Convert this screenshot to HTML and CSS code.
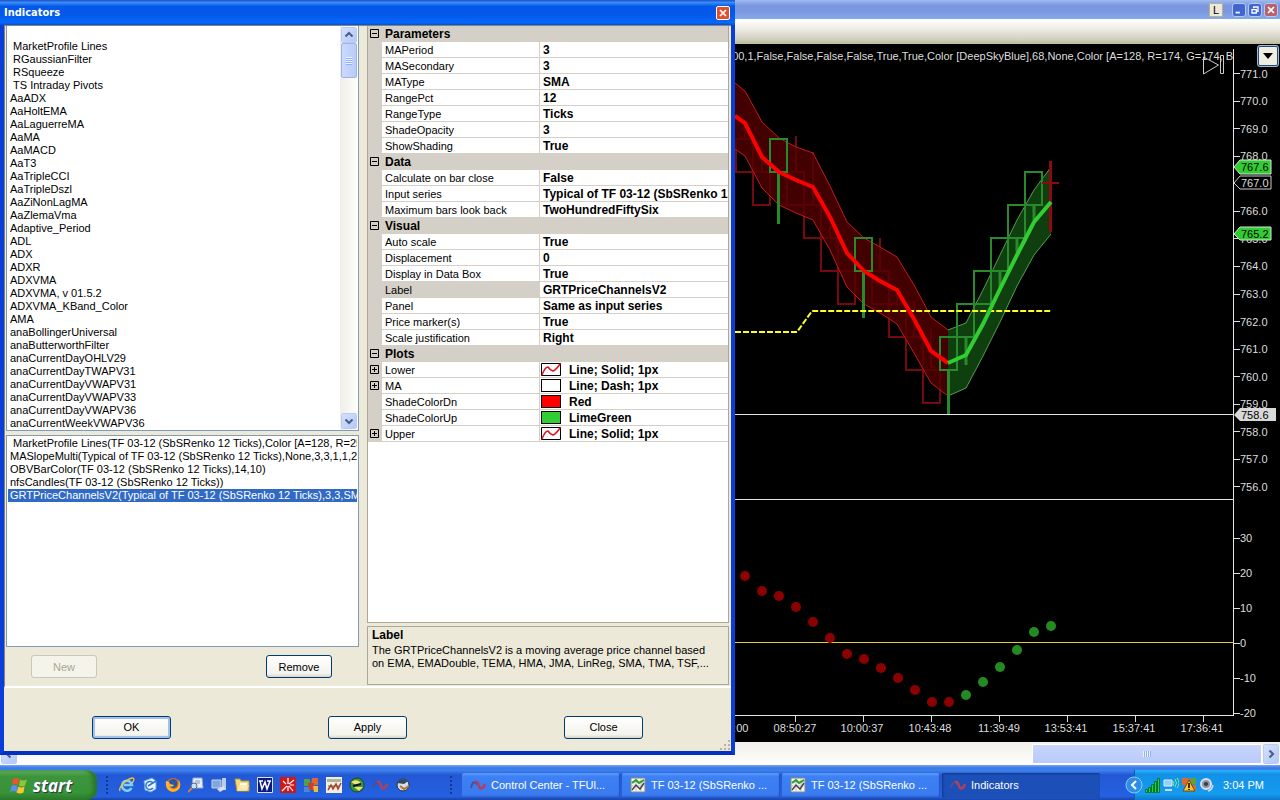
FILE: index.html
```html
<!DOCTYPE html>
<html lang="en">

<head>
  <meta charset="UTF-8">
  <meta name="viewport" content="width=device-width, initial-scale=1.0">
  <title>Indicators</title>
  <link rel="stylesheet" href="styles.css">
</head>
<body>
  <svg class="defs" width="0" height="0">
    <symbol id="minus" viewBox="0 0 9 9"><path d="M.5.5h8v8h-8zM2 4.5h5" fill="none" stroke="#000"/></symbol>
    <symbol id="plus" viewBox="0 0 9 9"><path d="M.5.5h8v8h-8zM2 4.5h5M4.5 2v5" fill="none" stroke="#000"/></symbol>
    <symbol id="up" viewBox="0 0 10 10"><path d="M1.5 6.500l3.500-3.500 3.500 3.500" fill="none" stroke="#4d6185" stroke-width="2.200"/></symbol>
    <symbol id="wave" viewBox="0 0 16 16"><path d="M1 11c1-6 4-8 6-3" fill="none" stroke="#4a4f9c" stroke-width="2"/><path d="M5 5c2-1 3 1 4 4s4 4 6-2" fill="none" stroke="#b0405c" stroke-width="2.500"/></symbol>
    <symbol id="chart" viewBox="0 0 16 16"><path d="M1 1h14v14H1z" fill="#f4f4ea" stroke="#888"/><path d="M2 5h12M2 9h12M6 2v12M11 2v12" stroke="#c8c8c0"/><path d="M2 6l4-3 3 3 5-3" fill="none" stroke="#299a30" stroke-width="2"/><path d="M2 13l4-5 4 4 4-6" fill="none" stroke="#445" stroke-width="1.500"/></symbol>
    <symbol id="line" viewBox="0 0 20 13"><path d="M.5.5h19v12H.5z" fill="#fff" stroke="#000"/><path d="M1 12q3-8 6-8 2 3 5 4 3-1 7-7" fill="none" stroke="#e01020" stroke-width="1.500"/></symbol>
  </svg>

  <main class="desktop">
    <section class="chart-window">
      <header class="chart-title">
        <button class="link-btn">L</button>
        <button class="win-btn" aria-label="Minimize"><svg viewBox="0 0 14 14"><path d="M3 10h5" stroke="#fff" stroke-width="2"/></svg></button>
        <button class="win-btn" aria-label="Restore"><svg viewBox="0 0 14 14"><path d="M5.500 5V3.500h5v5H9M3.500 6.500h5v4h-5z" fill="none" stroke="#fff" stroke-width="1.500"/></svg></button>
        <button class="win-btn win-close" aria-label="Close chart"><svg viewBox="0 0 14 14"><path d="M3.500 3.500l7 7M10.500 3.500l-7 7" stroke="#fff" stroke-width="2"/></svg></button>
      </header>
      <div class="chart-toolbar"></div>
      <div class="chart-area">
        <svg class="chart" viewBox="0 44 1280 698" preserveAspectRatio="xMaxYMin meet">
          <!-- price panel -->
          <g fill="none" stroke="#760810" stroke-width="2">
            <path d="M736 139h17v33h-17zM753 172h17v33h-17zM787 172h17v33h-17zM804 205h17v33h-17zM821 238h17v33h-17zM838 271h17v33h-17zM872 271h17v33h-17zM889 304h17v33h-17zM906 337h17v33h-17zM923 370h17v33h-17z"/>
            <path d="M753 172h34M745 127v12M762 152v20M796 136v36M813 152v53M830 226v12M880 238v33M897 296v8M914 301v36M931 329v41"/>
          </g>
          <path d="M735 83L745 91L762 122L779 138L796 147L813 153L830 186L847 222L864 238L880 247L897 257L914 285L931 317L948 330V396L931 383L914 353L897 324L880 313L864 304L847 287L830 250L813 220L796 213L779 205L762 188L745 156L735 149z" fill="#520000" fill-opacity=".8"/>
          <path d="M735 83L745 91L762 122L779 138L796 147L813 153L830 186L847 222L864 238L880 247L897 257L914 285L931 317L948 330M735 149L745 156L762 188L779 205L796 213L813 220L830 250L847 287L864 304L880 313L897 324L914 353L931 383L948 396" fill="none" stroke="#c41820"/>
          <path d="M948 330L966 323L983 290L1000 255L1017 220L1034 190L1051 167V234L1034 255L1017 286L1000 322L983 356L966 388L948 396z" fill="#32cd32" fill-opacity=".3"/>
          <path d="M948 330L966 323L983 290L1000 255L1017 220L1034 190L1051 167M948 396L966 388L983 356L1000 322L1017 286L1034 255L1051 234" fill="none" stroke="#4fa14f"/>
          <g fill="none" stroke="#278a2b" stroke-width="2">
            <path d="M770 139h17v33h-17zM855 238h17v33h-17zM940 337h17v33h-17zM957 304h17v33h-17zM974 271h17v33h-17zM991 238h17v33h-17zM1008 205h17v33h-17zM1025 172h17v33h-17z"/>
            <path d="M778.500 172v52M863.500 271v47M948.500 370v44M966 337v28M1000 271v20M1017 238v14M1034 205v15" stroke-width="3"/>
          </g>
          <path d="M1050.500 161v71" stroke="#8b0a12" stroke-width="3"/>
          <path d="M1042 183h17" stroke="#8b0a12" stroke-width="2"/>
          <path d="M735 332h62l15-21h239" fill="none" stroke="#ff2" stroke-width="2" stroke-dasharray="6 2"/>
          <path d="M735 116L745 123L762 157L779 172L796 180L813 187L830 217L847 253L864 271L880 281L897 290L914 319L931 351L948 363" fill="none" stroke="#f00" stroke-width="4"/>
          <path d="M948 363L966 355L983 324L1000 289L1017 255L1034 222L1051 202" fill="none" stroke="#32cd32" stroke-width="4"/>
          <path d="M0 414.500h1234M0 499.500h1234M1233.500 49v667M0 715.500h1234" stroke="#e4e4e4" fill="none"/>
          <path d="M0 642.500h1234" stroke="#e8c93c"/>
          <path d="M1234 73.500h6M1234 101.500h6M1234 128.500h6M1234 156.500h6M1234 183.500h6M1234 211.500h6M1234 238.500h6M1234 266.500h6M1234 294.500h6M1234 321.500h6M1234 349.500h6M1234 376.500h6M1234 404.500h6M1234 431.500h6M1234 459.500h6M1234 486.500h6M1234 538.500h6M1234 573.500h6M1234 608.500h6M1234 643.500h6M1234 678.500h6M1234 713.500h6" stroke="#ddd"/>
          <path d="M795.500 716v6M863.500 716v6M931.500 716v6M999.500 716v6M1067.500 716v6M1135.500 716v6M1203.500 716v6" stroke="#ddd"/>
          <g class="axis">
            <text x="1240" y="78">771.0</text><text x="1240" y="105">770.0</text><text x="1240" y="133">769.0</text><text x="1240" y="160">768.0</text>
            <text x="1240" y="215">766.0</text><text x="1240" y="243">765.0</text><text x="1240" y="270">764.0</text><text x="1240" y="298">763.0</text>
            <text x="1240" y="326">762.0</text><text x="1240" y="353">761.0</text><text x="1240" y="381">760.0</text><text x="1240" y="408">759.0</text>
            <text x="1240" y="436">758.0</text><text x="1240" y="463">757.0</text><text x="1240" y="491">756.0</text>
            <text x="1240" y="542">30</text><text x="1240" y="577">20</text><text x="1240" y="612">10</text><text x="1240" y="647">0</text><text x="1240" y="682">-10</text><text x="1240" y="717">-20</text>
          </g>
          <g class="axis" text-anchor="middle">
            <text x="727" y="732">08:14:00</text><text x="795" y="732">08:50:27</text><text x="862" y="732">10:00:37</text><text x="930" y="732">10:43:48</text>
            <text x="999" y="732">11:39:49</text><text x="1066" y="732">13:53:41</text><text x="1134" y="732">15:37:41</text><text x="1202" y="732">17:36:41</text>
          </g>
          <!-- price markers -->
          <path d="M1234 167l6-7h31v14h-31zM1234 234l6-7h31v13h-31z" fill="#32cd32" stroke="#cfe8cf"/>
          <path d="M1234 183l6-7h31v13h-31z" fill="#000" stroke="#ccc"/>
          <path d="M1234 415l6-7h36v13h-36z" fill="#d8d8d8"/>
          <g class="mark"><text x="1241" y="171">767.6</text><text x="1241" y="187" fill="#ddd">767.0</text><text x="1241" y="238">765.2</text><text x="1241" y="419">758.6</text></g>
          <!-- oscillator dots -->
          <g fill="#8b0000">
            <circle cx="745" cy="576" r="5"/><circle cx="762" cy="591" r="5"/><circle cx="779" cy="596" r="5"/><circle cx="796" cy="607" r="5"/><circle cx="813" cy="622" r="5"/>
            <circle cx="830" cy="638" r="5"/><circle cx="847" cy="654" r="5"/><circle cx="864" cy="659" r="5"/><circle cx="881" cy="668" r="5"/><circle cx="898" cy="678" r="5"/>
            <circle cx="915" cy="690" r="5"/><circle cx="932" cy="702" r="5"/><circle cx="949" cy="702" r="5"/>
          </g>
          <g fill="#228b22">
            <circle cx="966" cy="695" r="5"/><circle cx="983" cy="682" r="5"/><circle cx="1000" cy="667" r="5"/><circle cx="1017" cy="650" r="5"/><circle cx="1034" cy="632" r="5"/><circle cx="1051" cy="626" r="5"/>
          </g>
          <text class="axis" x="1233" y="60" text-anchor="end">00,1,False,False,False,False,True,True,Color [DeepSkyBlue],68,None,Color [A=128, R=174, G=174, B</text>
          <path d="M1203.500 57v17l15-9zM1220.500 55.500h3v18h-3z" fill="none" stroke="#ccc"/>
        </svg>
        <button class="panel-menu" aria-label="Chart menu"><svg viewBox="0 0 10 6"><path d="M0 0h10L5 6z"/></svg></button>
      </div>
      <div class="hscroll">
        <button class="sb-btn left" aria-label="Scroll left"><svg><use href="#up"/></svg></button>
        <span class="hthumb"></span>
        <button class="sb-btn right" aria-label="Scroll right"><svg><use href="#up"/></svg></button>
      </div>
    </section>

    <section class="dialog">
      <header class="dialog-title">
        <h1>Indicators</h1>
        <button class="close-btn" aria-label="Close dialog"><svg viewBox="0 0 14 14"><path d="M3.500 3.500l7 7M10.500 3.500l-7 7" stroke="#fff" stroke-width="2"/></svg></button>
      </header>
      <div class="dialog-body">
        <div class="left-col">
          <div class="list-wrap">
            <select class="list available" size="31" aria-label="Available indicators">
              <option>&nbsp;</option>
              <option>&nbsp;MarketProfile Lines</option>
              <option>&nbsp;RGaussianFilter</option>
              <option>&nbsp;RSqueeze</option>
              <option>&nbsp;TS Intraday Pivots</option>
              <option>AaADX</option>
              <option>AaHoltEMA</option>
              <option>AaLaguerreMA</option>
              <option>AaMA</option>
              <option>AaMACD</option>
              <option>AaT3</option>
              <option>AaTripleCCI</option>
              <option>AaTripleDszl</option>
              <option>AaZiNonLagMA</option>
              <option>AaZlemaVma</option>
              <option>Adaptive_Period</option>
              <option>ADL</option>
              <option>ADX</option>
              <option>ADXR</option>
              <option>ADXVMA</option>
              <option>ADXVMA, v 01.5.2</option>
              <option>ADXVMA_KBand_Color</option>
              <option>AMA</option>
              <option>anaBollingerUniversal</option>
              <option>anaButterworthFilter</option>
              <option>anaCurrentDayOHLV29</option>
              <option>anaCurrentDayTWAPV31</option>
              <option>anaCurrentDayVWAPV31</option>
              <option>anaCurrentDayVWAPV33</option>
              <option>anaCurrentDayVWAPV36</option>
              <option>anaCurrentWeekVWAPV36</option>
            </select>
            <div class="vscroll">
              <button class="sb-btn" aria-label="Scroll up"><svg><use href="#up"/></svg></button>
              <span class="vthumb"></span>
              <button class="sb-btn down" aria-label="Scroll down"><svg><use href="#up"/></svg></button>
            </div>
          </div>
          <select class="list active" size="16" aria-label="Active indicators">
            <option>&nbsp;MarketProfile Lines(TF 03-12 (SbSRenko 12 Ticks),Color [A=128, R=255</option>
            <option>MASlopeMulti(Typical of TF 03-12 (SbSRenko 12 Ticks),None,3,3,1,1,255</option>
            <option>OBVBarColor(TF 03-12 (SbSRenko 12 Ticks),14,10)</option>
            <option>nfsCandles(TF 03-12 (SbSRenko 12 Ticks))</option>
            <option selected>GRTPriceChannelsV2(Typical of TF 03-12 (SbSRenko 12 Ticks),3,3,SMA</option>
          </select>
          <div class="list-btns">
            <button class="btn small" disabled>New</button>
            <button class="btn small">Remove</button>
          </div>
        </div>
        <div class="right-col">
          <div class="grid-box">
            <table class="props">
              <colgroup><col class="c-gutter"><col class="c-name"><col></colgroup>
              <tr class="cat"><td><button class="exp" aria-label="Collapse"><svg><use href="#minus"/></svg></button></td><th colspan="2">Parameters</th></tr>
              <tr><td></td><td>MAPeriod</td><td>3</td></tr>
              <tr><td></td><td>MASecondary</td><td>3</td></tr>
              <tr><td></td><td>MAType</td><td>SMA</td></tr>
              <tr><td></td><td>RangePct</td><td>12</td></tr>
              <tr><td></td><td>RangeType</td><td>Ticks</td></tr>
              <tr><td></td><td>ShadeOpacity</td><td>3</td></tr>
              <tr><td></td><td>ShowShading</td><td>True</td></tr>
              <tr class="cat"><td><button class="exp" aria-label="Collapse"><svg><use href="#minus"/></svg></button></td><th colspan="2">Data</th></tr>
              <tr><td></td><td>Calculate on bar close</td><td>False</td></tr>
              <tr><td></td><td>Input series</td><td>Typical of TF 03-12 (SbSRenko 12 Ticks)</td></tr>
              <tr><td></td><td>Maximum bars look back</td><td>TwoHundredFiftySix</td></tr>
              <tr class="cat"><td><button class="exp" aria-label="Collapse"><svg><use href="#minus"/></svg></button></td><th colspan="2">Visual</th></tr>
              <tr><td></td><td>Auto scale</td><td>True</td></tr>
              <tr><td></td><td>Displacement</td><td>0</td></tr>
              <tr><td></td><td>Display in Data Box</td><td>True</td></tr>
              <tr class="current"><td></td><td>Label</td><td>GRTPriceChannelsV2</td></tr>
              <tr><td></td><td>Panel</td><td>Same as input series</td></tr>
              <tr><td></td><td>Price marker(s)</td><td>True</td></tr>
              <tr><td></td><td>Scale justification</td><td>Right</td></tr>
              <tr class="cat"><td><button class="exp" aria-label="Collapse"><svg><use href="#minus"/></svg></button></td><th colspan="2">Plots</th></tr>
              <tr class="plot"><td><button class="exp" aria-label="Expand"><svg><use href="#plus"/></svg></button></td><td>Lower</td><td><svg class="swatch"><use href="#line"/></svg>Line; Solid; 1px</td></tr>
              <tr class="plot"><td><button class="exp" aria-label="Expand"><svg><use href="#plus"/></svg></button></td><td>MA</td><td><span class="swatch"></span>Line; Dash; 1px</td></tr>
              <tr class="plot"><td></td><td>ShadeColorDn</td><td><span class="swatch red"></span>Red</td></tr>
              <tr class="plot"><td></td><td>ShadeColorUp</td><td><span class="swatch green"></span>LimeGreen</td></tr>
              <tr class="plot"><td><button class="exp" aria-label="Expand"><svg><use href="#plus"/></svg></button></td><td>Upper</td><td><svg class="swatch"><use href="#line"/></svg>Line; Solid; 1px</td></tr>
            </table>
          </div>
          <div class="desc">
            <h2>Label</h2>
            <p>The GRTPriceChannelsV2 is a moving average price channel based<br>on EMA, EMADouble, TEMA, HMA, JMA, LinReg, SMA, TMA, TSF,...</p>
          </div>
        </div>
      </div>
      <footer class="dialog-footer">
        <button class="btn default">OK</button>
        <button class="btn">Apply</button>
        <button class="btn">Close</button>
        <svg class="grip" viewBox="0 0 12 12"><path d="M9 1h2v2H9zM5 5h2v2H5zM9 5h2v2H9zM1 9h2v2H1zM5 9h2v2H5zM9 9h2v2H9z" fill="#b8b4a0"/></svg>
      </footer>
    </section>
  </main>

  <nav class="taskbar">
    <button class="start">
      <svg viewBox="0 0 18 18"><path d="M3 3q3-2 6 0L8 9Q5 7 2 9z" fill="#e8562c"/><path d="M10 3.500q3 2 7 0l-2 6q-3 2-6 0z" fill="#8cc63c"/><path d="M1.500 10q3-2 6 0l-1 6Q4 14 0 16z" fill="#5a8ef0"/><path d="M8.500 10.500q3 2 6 0l-1 6q-4 2-7 0z" fill="#fbc52d"/></svg>
      start
    </button>
    <span class="dots"></span>
    <div class="quick">
      <button aria-label="Internet Explorer"><svg viewBox="0 0 16 16"><path d="M12.500 11A5 5 0 1 1 13 8H5" fill="none" stroke="#7fd0ff" stroke-width="2.500"/><path d="M1 14C-1 10 9 1 14 1c2 1 0 4-1 5" fill="none" stroke="#f4c430" stroke-width="1.300"/></svg></button>
      <button aria-label="Outlook Express"><svg viewBox="0 0 16 16"><path d="M2 4l8-3 4 3v8l-5 3-6-2z" fill="#e8f4ff" stroke="#5ba4e0"/><path d="M11 6a4 4 0 1 0 0 5M6 9l8-5" fill="none" stroke="#2d77c8" stroke-width="1.500"/></svg></button>
      <button aria-label="Firefox"><svg viewBox="0 0 16 16"><circle cx="8" cy="8" r="7" fill="#e66a10"/><circle cx="8" cy="6.500" r="4.500" fill="#2a55a8"/><path d="M1 4q3 0 4 3l4 1q-1 3-5 1 3 5 8 2 3-3 1-9 4 5 1 10-4 4-9 2Q0 11 1 4z" fill="#ffb62e"/></svg></button>
      <button aria-label="Search"><svg viewBox="0 0 16 16"><path d="M5 1h9l1 10H4z" fill="#e9f0ff" stroke="#90a8d8"/><path d="M7 4h5M7 6h5" stroke="#7898d0"/><circle cx="6" cy="9" r="3" fill="#bfe0ff" stroke="#667"/><path d="M4 11l-4 4" stroke="#c88050" stroke-width="2"/></svg></button>
      <button aria-label="Show desktop"><svg viewBox="0 0 16 16"><path d="M1 3h9v8H1z" fill="#7fa8e0" stroke="#ccd"/><path d="M11 1h4v12h-4z" fill="#b8cce8"/><path d="M6 12l7-3 1 3-5 3z" fill="#dde"/></svg></button>
      <button aria-label="Explorer"><svg viewBox="0 0 16 16"><path d="M1 2h5l1 2h8v10H3z" fill="#f3d978" stroke="#b8923c"/><path d="M6 6h7v6H6z" fill="#fff"/><path d="M3 14l2-6h10l-2 6z" fill="#fce89a" opacity=".8"/></svg></button>
      <button aria-label="Word"><svg viewBox="0 0 16 16"><path d="M.5.5h15v15H.5z" fill="#0a1a80" stroke="#dde"/><path d="M3 4l2 8 3-7 2 7 3-8M2 4h4M10 4h4" fill="none" stroke="#fff" stroke-width="1.500"/></svg></button>
      <button aria-label="Trading"><svg viewBox="0 0 16 16"><path d="M0 0h16v16H0z" fill="#d01818"/><path d="M8 7V1M9 7l5-4M9 9l4 5M7 9l-5 5M6 7L3 4M8 9v5M10 8h4" stroke="#fff" stroke-width="1.200"/></svg></button>
      <button aria-label="Office"><svg viewBox="0 0 16 16"><path d="M1 2h6v7H1z" fill="#58a048"/><path d="M9 1h6v7H8z" fill="#e0682c"/><path d="M1 10h5l1 5H1z" fill="#4888d8"/><path d="M5 6h6v7H6z" fill="#c84030"/><path d="M10 9h5v6h-4z" fill="#f0bc38"/></svg></button>
      <button aria-label="Charts"><svg viewBox="0 0 16 16"><path d="M0 0h16v16H0z" fill="#f3efe0"/><path d="M1 2h14v3H1z" fill="#aab4a0"/><path d="M2 13l3-5 2 4 3-5 2 5 3-6" fill="none" stroke="#c03028" stroke-width="1.500"/><path d="M2 9h12" stroke="#40803c"/></svg></button>
      <button aria-label="Globe"><svg viewBox="0 0 16 16"><circle cx="8" cy="8" r="7" fill="#3c9838" stroke="#184820"/><path d="M2 5q6-4 10 1L7 8zM5 10h9l-4 4z" fill="#f6e070"/><path d="M4 9l8-2" stroke="#113" stroke-width="2"/></svg></button>
      <button aria-label="NinjaTrader"><svg><use href="#wave"/></svg></button>
      <button aria-label="Mail"><svg viewBox="0 0 16 16"><circle cx="8" cy="8" r="6" fill="#d8dce8" stroke="#234"/><path d="M2 6q4-6 11-2L9 7z" fill="#334860"/><path d="M5 9l4 3 5-3" fill="none" stroke="#a87838" stroke-width="2"/></svg></button>
    </div>
    <span class="dots"></span>
    <div class="tasks">
      <button class="task"><svg><use href="#wave"/></svg>Control Center - TFUl...</button>
      <button class="task"><svg><use href="#chart"/></svg>TF 03-12 (SbSRenko ...</button>
      <button class="task"><svg><use href="#chart"/></svg>TF 03-12 (SbSRenko ...</button>
      <button class="task pressed"><svg><use href="#wave"/></svg>Indicators</button>
    </div>
    <div class="tray">
      <button class="chevron" aria-label="Show hidden icons"><svg viewBox="0 0 18 18"><circle cx="9" cy="9" r="8" fill="#2d8ee8" stroke="#8cc8ff"/><path d="M11 5L7 9l4 4" fill="none" stroke="#fff" stroke-width="2"/></svg></button>
      <svg viewBox="0 0 16 16"><path d="M.5 12.500h2v3h-2zM3.500 10.500h2v5h-2zM6.500 7.500h2v8h-2zM9.500 4.500h2v11h-2zM12.500 1.500h2v14h-2z" fill="#2fd038" stroke="#073" /></svg>
      <svg viewBox="0 0 16 16"><path d="M1 3h8v6H1z" fill="#8fd0ff" stroke="#def"/><path d="M2 12h7v2H2z" fill="#cde"/><path d="M10 4q2 2 0 5M12 2q3 4 0 8M14 1q4 5 0 10" fill="none" stroke="#7df080"/></svg>
      <svg viewBox="0 0 16 16"><path d="M1 1h7v7H1zM9 8h6v6H9z" fill="#e0682c"/><path d="M9 1h6v6H9z" fill="#6a9c38"/><path d="M8 3l6 11H2z" fill="#ffc425" stroke="#7a4a08"/><path d="M8 6v5M8 12v1" stroke="#000" stroke-width="1.500"/></svg>
      <svg viewBox="0 0 16 16"><circle cx="7" cy="7" r="5" fill="#8c94a0" stroke="#dde" stroke-width="2"/><circle cx="7" cy="7" r="2" fill="#333a48"/><path d="M14 8q-1 5-5 6" fill="none" stroke="#cde" stroke-width="1.500"/></svg>
      <time>3:04 PM</time>
    </div>
  </nav>
</body>

</html>
```

FILE: styles.css
```css
* {
  box-sizing: border-box;
}

body {
  margin: 0;
  height: 100vh;
  display: flex;
  flex-direction: column;
  overflow: hidden;
  font-family: "Liberation Sans", Arial, sans-serif;
  font-size: 11px;
  color: #000;
}

button {
  font: inherit;
  padding: 0;
  border: none;
  background: none;
  color: inherit;
}

svg {
  display: block;
}

.defs {
  position: absolute;
}

.desktop {
  flex: 1;
  min-height: 0;
  display: flex;
  position: relative;
}

/* chart window behind the dialog */
.chart-window {
  flex: 1;
  min-width: 0;
  display: flex;
  flex-direction: column;
  background: #000;
}

.chart-title {
  height: 19px;
  display: flex;
  justify-content: flex-end;
  align-items: center;
  gap: 2px;
  padding-right: 2px;
  background: linear-gradient(#a0bcf0, #7a96df 30%, #7b98e0 60%, #84abeb);
}

.link-btn {
  width: 14px;
  height: 14px;
  margin-right: 7px;
  background: #ece9d8;
  border: 1px solid #b8b090;
  line-height: 12px;
}

.win-btn {
  width: 14px;
  height: 14px;
  border: 1px solid #b4c8f4;
  border-radius: 3px;
  background: #4166d0;
}

.win-close {
  background: #b8606c;
}

.chart-toolbar {
  height: 25px;
  background: linear-gradient(#fff, #eeece4 40%, #d2d0c0 80%, #bdbd9c);
}

.chart-area {
  flex: 1;
  min-height: 0;
  position: relative;
}

.chart {
  width: 100%;
  height: 100%;
}

.axis {
  fill: #ddd;
  font-size: 11px;
}

.mark {
  font-size: 11px;
}

.panel-menu {
  position: absolute;
  top: 1px;
  right: 1px;
  width: 22px;
  height: 22px;
  background: #f0eee2;
  border: 2px solid #1c4a80;
  border-radius: 3px;
  outline: 1px solid #a8b8c8;
  outline-offset: -1px;
}

.panel-menu svg {
  width: 10px;
  height: 6px;
  margin: auto;
}

.hscroll {
  height: 23px;
  display: flex;
  align-items: center;
  padding: 0 1px;
  background: linear-gradient(#f2f0ea, #fefefc);
}

.hthumb {
  width: 18%;
  height: 20px;
  margin: 0 1px 0 auto;
  border: 1px solid #fff;
  border-radius: 2px;
  background:
    repeating-linear-gradient(90deg, #eef4fe 0 1px, #8cb0f8 1px 2px) center / 8px 6px no-repeat,
    linear-gradient(#c8d6fb, #b9cafa);
}

.sb-btn {
  width: 16px;
  height: 16px;
  flex: none;
  display: flex;
  align-items: center;
  justify-content: center;
  border: 1px solid #fff;
  border-radius: 2px;
  background: linear-gradient(135deg, #d4e0fd, #b4c8f8);
  outline: 1px solid #b8cbf4;
  outline-offset: -1px;
}

.sb-btn svg {
  width: 10px;
  height: 10px;
}

.hscroll .sb-btn {
  height: 20px;
}

.sb-btn.down svg {
  transform: rotate(180deg);
}

.sb-btn.right svg {
  transform: rotate(90deg);
}

.sb-btn.left svg {
  transform: rotate(-90deg);
}

/* indicators dialog */
.dialog {
  position: absolute;
  top: 0;
  left: 0;
  width: 735px;
  max-width: 100%;
  height: calc(100% - 10px);
  display: flex;
  flex-direction: column;
  background: #ece9d8;
  border: 4px solid #0a3ed8;
  border-top: none;
  border-bottom-color: #0430c0;
}

.dialog-title {
  height: 25px;
  flex: none;
  margin: 0 -4px;
  padding: 0 5px 0 4px;
  display: flex;
  align-items: center;
  justify-content: space-between;
  background: linear-gradient(#1c50c8, #3a8cf8 10%, #0458e8 25%, #0458ea 60%, #0468fc 90%, #0450d8);
}

.dialog-title h1 {
  margin: 0;
  font: bold 11px "DejaVu Sans Condensed", "DejaVu Sans", sans-serif;
  color: #fff;
}

.close-btn {
  width: 14px;
  height: 14px;
  border: 1px solid #fff;
  border-radius: 2px;
  background: #e0502c;
}

.close-btn svg,
.win-btn svg {
  width: 12px;
  height: 12px;
}

.dialog-body {
  flex: 1;
  min-height: 0;
  display: flex;
  gap: 8px;
  padding: 0 2px 0 1px;
  border-left: 1px solid #888474;
  border-top: 1px solid #888474;
  border-bottom: 2px solid #fff;
}

.left-col {
  flex: 1;
  min-width: 0;
  display: flex;
  flex-direction: column;
}

.list-wrap {
  flex: 1;
  min-height: 0;
  display: flex;
  border: 1px solid #7f9db9;
  border-top: none;
  background: #fff;
}

.list {
  display: block;
  margin: 0;
  padding: 1px 0 0 1px;
  border: none;
  border-radius: 0;
  outline: none;
  overflow: hidden;
  background: #fff;
  color: #000;
  font-family: inherit;
  font-size: 11px;
}

.list option {
  height: 13px;
  min-height: 0;
  padding: 0 2px;
  line-height: 13px;
  overflow: hidden;
}

.available {
  flex: 1;
  min-width: 0;
  height: 100%;
}

.active {
  width: 100%;
  height: 212px;
  margin-top: 4px;
  border: 1px solid #7f9db9;
  padding-right: 1px;
}

.active option:checked {
  background: #316ac5 linear-gradient(#316ac5, #316ac5);
  color: #fff;
}

.vscroll {
  width: 18px;
  padding: 1px;
  display: flex;
  flex-direction: column;
  background: linear-gradient(90deg, #f0eee8, #fefefc);
}

.vthumb {
  height: 35px;
  margin-bottom: auto;
  border: 1px solid #9cb4ec;
  border-radius: 2px;
  background:
    repeating-linear-gradient(#eef4fe 0 1px, #8cb0f8 1px 2px) center / 6px 8px no-repeat,
    linear-gradient(90deg, #cbd9fd, #b9cbf8);
}

.list-btns {
  height: 39px;
  display: flex;
  align-items: center;
  justify-content: space-between;
  padding: 0 27px 0 25px;
}

.btn {
  width: 79px;
  height: 23px;
  border: 1px solid #003c74;
  border-radius: 3px;
  background: linear-gradient(#fff, #f3f2ec 85%, #d8d2c4);
}

.btn.small {
  width: 66px;
}

.btn.default {
  box-shadow: inset 0 0 0 2px #a4c0f0;
}

.btn:disabled {
  border-color: #c9c7ba;
  background: #f5f4ea;
  color: #a8a594;
}

.right-col {
  width: 362px;
  flex: none;
  display: flex;
  flex-direction: column;
  gap: 3px;
}

.grid-box {
  flex: 1;
  min-height: 0;
  border: 1px solid #aca899;
  border-top: none;
  background: #fff;
  overflow: hidden;
}

.props {
  width: 100%;
  table-layout: fixed;
  border-collapse: separate;
  border-spacing: 0;
}

.c-gutter {
  width: 14px;
}

.c-name {
  width: 158px;
}

.props td,
.props th {
  height: 16px;
  padding: 1px 3px 0;
  line-height: 14px;
  border-bottom: 1px solid #d4d0c8;
  white-space: nowrap;
  overflow: hidden;
  text-align: left;
}

.props td:first-child,
.props .cat th,
.props .current td:nth-child(2) {
  background: #d4d0c8;
}

.props td:first-child {
  padding: 0 2px;
}

.props td:nth-child(2) {
  border-right: 1px solid #d4d0c8;
}

.props .cat th,
.props td:nth-child(3) {
  font-size: 12px;
  font-weight: bold;
}

.exp {
  display: block;
  width: 9px;
  height: 9px;
}

.exp svg {
  width: 9px;
  height: 9px;
}

.swatch {
  float: left;
  width: 20px;
  height: 13px;
  margin: 0 8px 0 -2px;
  border: 1px solid #000;
  background: #fff;
}

svg.swatch {
  border: none;
}

.swatch.red {
  background: #f00;
}

.swatch.green {
  background: #32cd32;
}

.desc {
  height: 59px;
  margin-bottom: 1px;
  padding: 2px 4px;
  border: 1px solid #aca899;
  line-height: 13px;
}

.desc h2 {
  margin: 0 0 2px;
  font-size: 12px;
  line-height: 13px;
}

.desc p {
  margin: 0;
  white-space: nowrap;
}

.dialog-footer {
  height: 63px;
  flex: none;
  position: relative;
  display: flex;
  align-items: center;
  justify-content: center;
  gap: 157px;
  padding-top: 15px;
}

.grip {
  position: absolute;
  right: 0;
  bottom: 0;
  width: 12px;
  height: 12px;
}

/* taskbar */
.taskbar {
  height: 35px;
  flex: none;
  display: flex;
  align-items: stretch;
  padding-top: 5px;
  color: #fff;
  background: linear-gradient(#7ba4f0, #3a7ae8 8%, #3c80ee 16%, #2358d4 28%, #245edc 70%, #2460e0 90%, #1a44a8);
}

.start {
  width: 97px;
  display: flex;
  align-items: center;
  gap: 5px;
  padding-left: 10px;
  border-radius: 0 10px 10px 0;
  background: linear-gradient(#6cb868, #3c943c 20%, #389438 75%, #2c7c2c);
  box-shadow: inset -4px 0 4px #2a742a;
  font: italic bold 17px "Open Sans", sans-serif;
  text-shadow: 1px 1px 1px #234;
}

.start svg {
  width: 18px;
  height: 18px;
}

.dots {
  width: 5px;
  margin: 5px 8px;
  background: radial-gradient(circle, #123a94 1px, transparent 1px) 0 0 / 4px 4px;
}

.quick {
  width: 323px;
  display: flex;
  align-items: center;
  justify-content: space-between;
  padding: 0 30px 0 1px;
}

.quick svg,
.task svg {
  width: 16px;
  height: 16px;
}

.tasks {
  flex: 1;
  display: flex;
  align-items: center;
  gap: 2px;
  min-width: 0;
}

.task {
  flex: 0 1 158px;
  min-width: 0;
  height: 25px;
  display: flex;
  align-items: center;
  gap: 5px;
  padding: 0 8px;
  border-radius: 2px;
  background: linear-gradient(#5c9cfc, #3c80f4 15%, #3a7cf0 85%, #2c68dc);
  box-shadow: inset -1px -1px 1px #2454c0;
  white-space: nowrap;
}

.task.pressed {
  background: #1c4fb8;
  box-shadow: inset 1px 1px 2px #123880;
}

.tray {
  width: 146px;
  position: relative;
  display: flex;
  align-items: center;
  gap: 2px;
  padding-left: 10px;
  background: linear-gradient(#2cb4f8, #1290e8 15%, #149cf0 80%, #0e78cc);
  border-left: 1px solid #0c5cb0;
}

.tray svg {
  width: 16px;
  height: 16px;
}

.tray .chevron {
  width: 18px;
  height: 18px;
  margin-left: -20px;
}

.chevron svg {
  width: 18px;
  height: 18px;
}

.tray time {
  margin-left: 6px;
}
```
